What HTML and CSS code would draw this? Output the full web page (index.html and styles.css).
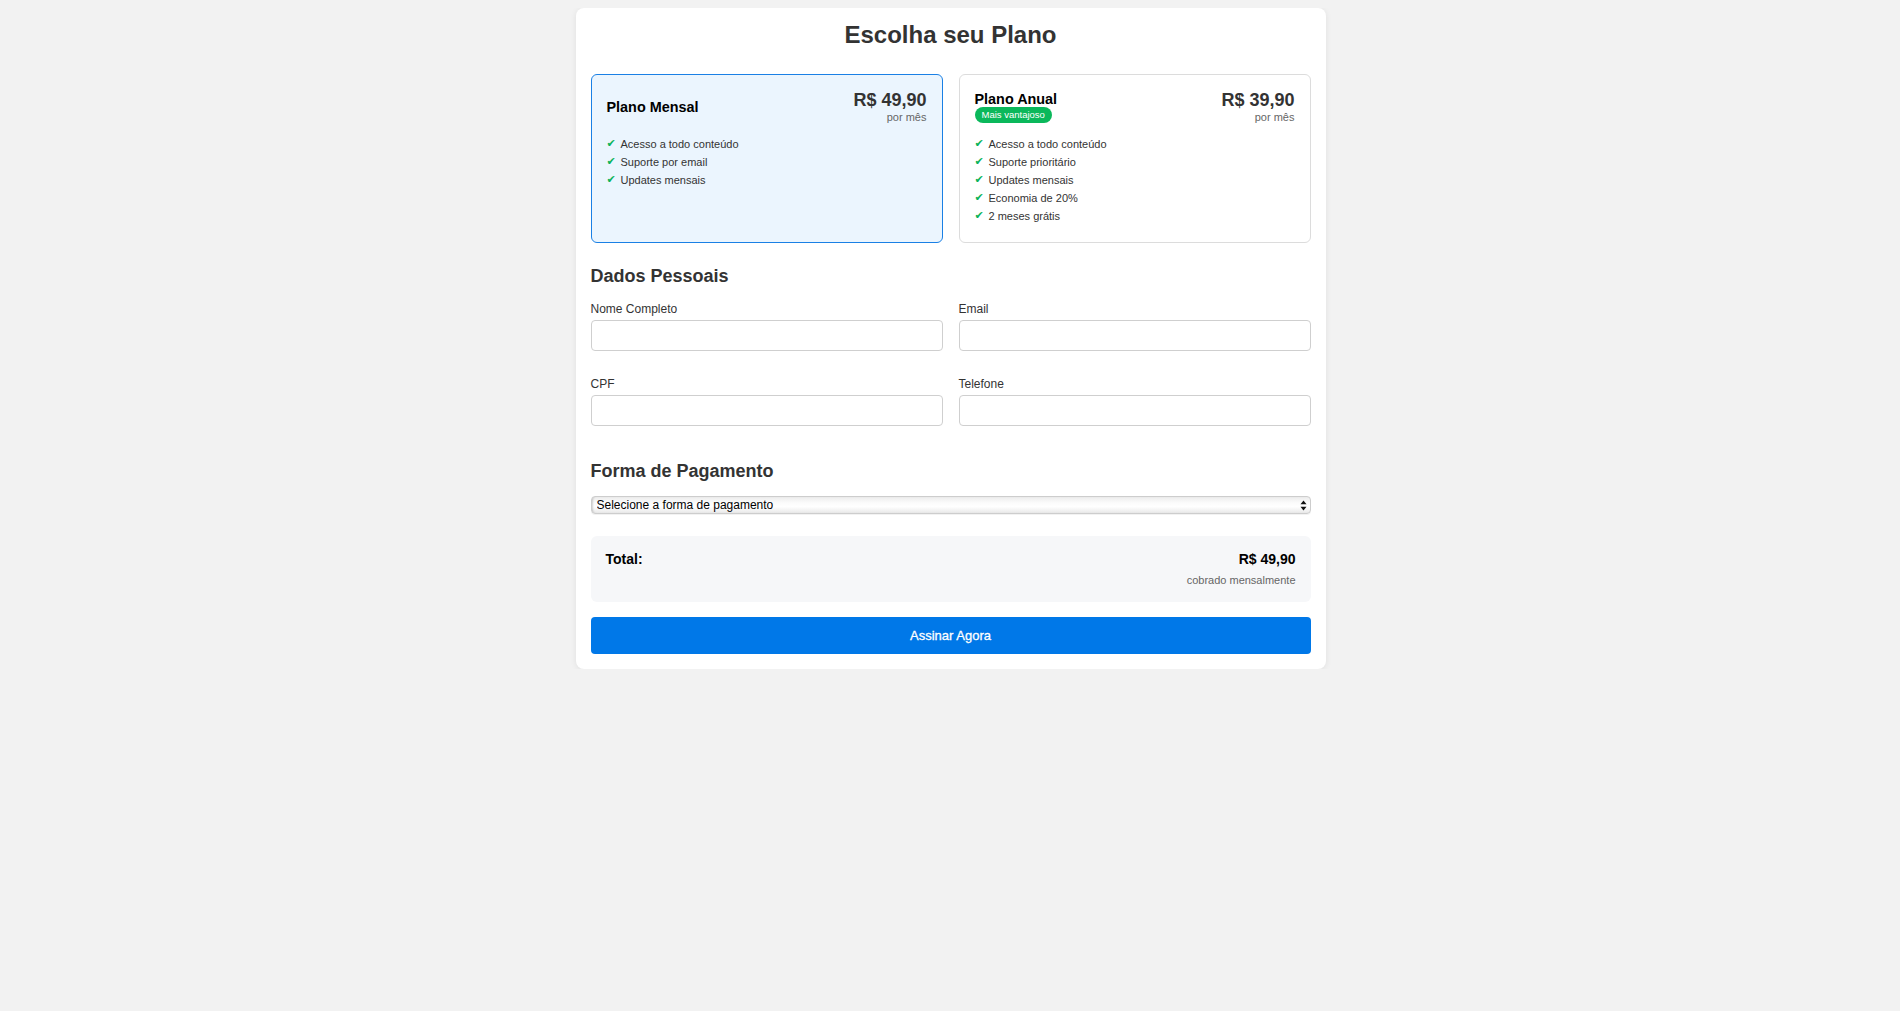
FILE: index.html
```html
<!DOCTYPE html>
<html lang="pt-BR">
<head>
<meta charset="utf-8">
<title>Escolha seu Plano</title>
<link rel="stylesheet" href="styles.css">
</head>
<body>
<div class="container">
  <h1 class="page-title">Escolha seu Plano</h1>

  <div class="plans">
    <div class="plan plan-selected">
      <div class="plan-header">
        <div class="plan-name-block">
          <div class="plan-name">Plano Mensal</div>
        </div>
        <div class="plan-price-block">
          <div class="plan-price">R$ 49,90</div>
          <div class="plan-period">por mês</div>
        </div>
      </div>
      <ul class="features">
        <li><span class="check">✔</span>Acesso a todo conteúdo</li>
        <li><span class="check">✔</span>Suporte por email</li>
        <li><span class="check">✔</span>Updates mensais</li>
      </ul>
    </div>

    <div class="plan">
      <div class="plan-header">
        <div class="plan-name-block">
          <div class="plan-name">Plano Anual</div>
          <span class="badge">Mais vantajoso</span>
        </div>
        <div class="plan-price-block">
          <div class="plan-price">R$ 39,90</div>
          <div class="plan-period">por mês</div>
        </div>
      </div>
      <ul class="features">
        <li><span class="check">✔</span>Acesso a todo conteúdo</li>
        <li><span class="check">✔</span>Suporte prioritário</li>
        <li><span class="check">✔</span>Updates mensais</li>
        <li><span class="check">✔</span>Economia de 20%</li>
        <li><span class="check">✔</span>2 meses grátis</li>
      </ul>
    </div>
  </div>

  <h2 class="section-title">Dados Pessoais</h2>
  <div class="form-grid">
    <div class="form-group">
      <label class="field-label">Nome Completo</label>
      <input class="field-input" type="text">
    </div>
    <div class="form-group">
      <label class="field-label">Email</label>
      <input class="field-input" type="email">
    </div>
    <div class="form-group">
      <label class="field-label">CPF</label>
      <input class="field-input" type="text">
    </div>
    <div class="form-group">
      <label class="field-label">Telefone</label>
      <input class="field-input" type="text">
    </div>
  </div>

  <h2 class="section-title section-payment">Forma de Pagamento</h2>
  <div class="select-wrap">
    <select class="payment-select">
      <option>Selecione a forma de pagamento</option>
    </select>
    <svg class="select-arrows" width="7" height="11" viewBox="0 0 7 11" aria-hidden="true">
      <path d="M3.5 0.5 L6.5 4.2 L0.5 4.2 Z" fill="#111"/>
      <path d="M3.5 10.5 L6.5 6.8 L0.5 6.8 Z" fill="#111"/>
    </svg>
  </div>

  <div class="total-box">
    <div class="total-label">Total:</div>
    <div class="total-right">
      <div class="total-price">R$ 49,90</div>
      <div class="total-note">cobrado mensalmente</div>
    </div>
  </div>

  <button class="submit-btn" type="button">Assinar Agora</button>
</div>
</body>
</html>
```

FILE: styles.css
```css
* {
  box-sizing: border-box;
}

body {
  margin: 8px 8px 8px 9px;
  background: #f2f2f2;
  font-family: "Liberation Sans", Arial, Helvetica, sans-serif;
  color: #333;
}

.container {
  max-width: 750px;
  margin: 0 auto;
  background: #fff;
  border-radius: 8px;
  padding: 15px;
  box-shadow: 0 1px 6px rgba(0, 0, 0, 0.08);
}

.page-title {
  margin: 0 0 27px;
  font-size: 24px;
  line-height: 24px;
  font-weight: bold;
  text-align: center;
  color: #333;
}

.plans {
  display: grid;
  grid-template-columns: 1fr 1fr;
  gap: 16px;
}

.plan {
  border: 1px solid #dcdcdc;
  border-radius: 6px;
  padding: 15px;
  background: #fff;
}

.plan-selected {
  border-color: #1a80e5;
  background: #ebf5fe;
}

.plan-header {
  display: flex;
  justify-content: space-between;
  align-items: center;
}

.plan-name {
  font-size: 14.4px;
  line-height: 18px;
  font-weight: bold;
  color: #000;
}

.badge {
  display: block;
  width: fit-content;
  margin-top: -1px;
  padding: 2px 7px;
  font-size: 9.5px;
  line-height: 11.5px;
  color: #fff;
  background: #0bb85b;
  border-radius: 10px;
}

.plan-price-block {
  text-align: right;
}

.plan-price {
  font-size: 18px;
  font-weight: bold;
  color: #333;
}

.plan-period {
  font-size: 11px;
  color: #666;
}

.features {
  list-style: none;
  margin: 12px 0 0;
  padding: 0 0 2px;
}

.features li {
  font-size: 11px;
  line-height: 18px;
  color: #333;
  display: flex;
  align-items: center;
}

.check {
  font-family: "DejaVu Sans", sans-serif;
  font-size: 11px;
  line-height: 18px;
  color: #0bb35a;
  width: 14px;
  flex: none;
}

.section-title {
  margin: 23px 0 15px;
  font-size: 18px;
  font-weight: bold;
  color: #333;
}

.section-payment {
  margin-top: 35px;
}

.form-grid {
  display: grid;
  grid-template-columns: 1fr 1fr;
  column-gap: 16px;
  row-gap: 26px;
}

.field-label {
  display: block;
  font-size: 12px;
  color: #333;
  margin-bottom: 4px;
}

.field-input {
  display: block;
  width: 100%;
  height: 31px;
  border: 1px solid #cfcfcf;
  border-radius: 4px;
  padding: 6px 8px;
  font: 12px "Liberation Sans", Arial, sans-serif;
  background: #fff;
}

.select-wrap {
  position: relative;
  margin-top: -1px;
}

.payment-select {
  -webkit-appearance: none;
  appearance: none;
  display: block;
  width: 100%;
  height: 18px;
  padding: 0 20px 0 5px;
  font: 12px "Liberation Sans", Arial, sans-serif;
  color: #000;
  border: 1px solid #cdcdcd;
  border-radius: 4px;
  background: linear-gradient(to bottom, #ececec 0%, #fbfbfb 35%, #ffffff 60%, #e9e9e9 100%);
  box-shadow: inset 2px 0 2px -1px rgba(0, 0, 0, 0.18), 0 1px 0 rgba(0, 0, 0, 0.05);
}

.select-arrows {
  position: absolute;
  right: 4px;
  top: 4px;
  pointer-events: none;
}

.total-box {
  margin-top: 22px;
  background: #f6f7f9;
  border-radius: 6px;
  padding: 15px 15px 16px;
  display: flex;
  justify-content: space-between;
  align-items: flex-start;
}

.total-label,
.total-price {
  font-size: 14px;
  font-weight: bold;
  color: #000;
}

.total-right {
  text-align: right;
}

.total-note {
  margin-top: 7px;
  font-size: 11px;
  color: #666;
}

.submit-btn {
  display: block;
  width: 100%;
  margin-top: 15px;
  height: 37px;
  border: none;
  border-radius: 4px;
  background: #0078e8;
  color: #fff;
  font: 500 13px "Liberation Sans", Arial, sans-serif;
  -webkit-text-stroke: 0.3px #fff;
  cursor: pointer;
}
```
